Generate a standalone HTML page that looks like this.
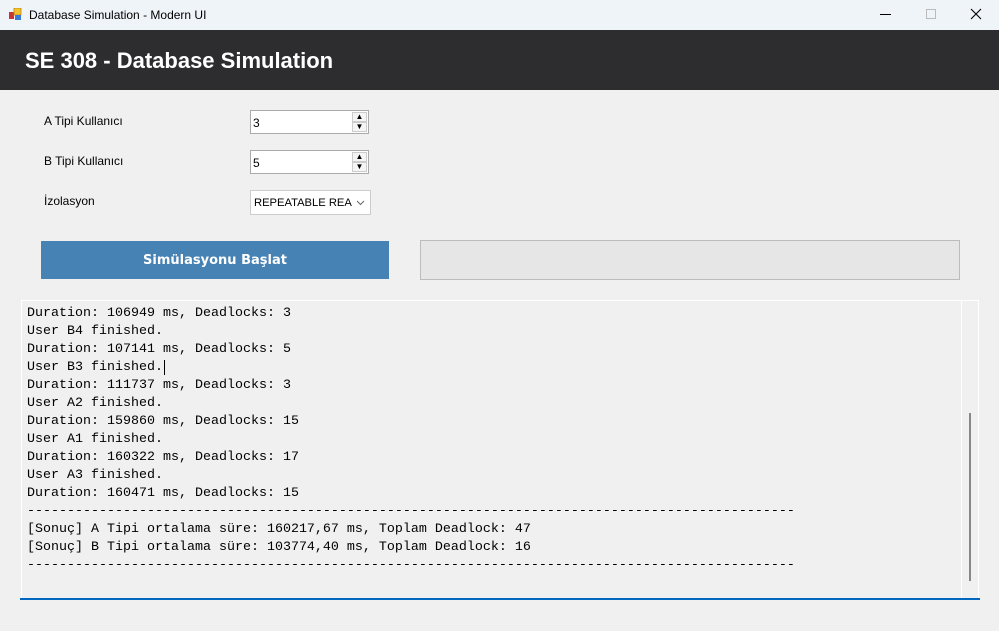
<!DOCTYPE html>
<html><head><meta charset="utf-8"><style>
*{margin:0;padding:0;box-sizing:border-box}
body{width:999px;height:631px;background:#f0f0f0;position:relative;overflow:hidden;font-family:"Liberation Sans","DejaVu Sans",sans-serif}
.tb{position:absolute;left:0;top:0;width:999px;height:30px;background:#eff4f9}
.tb .t{position:absolute;left:29px;top:8px;font-size:12px;color:#000}
.hd{position:absolute;left:0;top:30px;width:999px;height:60px;background:#2d2d30}
.hd span{position:absolute;left:25px;top:18px;color:#fff;font-weight:bold;font-size:22px;font-family:"Liberation Sans",sans-serif}
.lbl{position:absolute;left:44px;font-size:12px;color:#000}
.num{position:absolute;left:250px;width:119px;height:24px;border:1px solid #aaa;background:#fff;font-size:12px;padding:5px 0 0 2px}
.spin{position:absolute;right:1px;top:1px;width:15px;height:20px}
.spin div{height:10px;border:1px solid #ccc;background:#f5f5f5;font-size:8px;line-height:8px;text-align:center}
.cb{position:absolute;left:250px;top:190px;width:121px;height:25px;border:1px solid #ccc;background:#fff;font-size:11.2px;padding:6px 0 0 3px}
.btn{position:absolute;left:41px;top:241px;width:348px;height:38px;background:#4682b4;color:#fff;font-weight:bold;font-size:13px;text-align:center;line-height:40px;font-family:"DejaVu Sans",sans-serif}
.pb{position:absolute;left:420px;top:240px;width:540px;height:40px;border:1px solid #bcbcbc;background:#e6e6e6}
.box{position:absolute;left:21px;top:300px;width:958px;height:298px;border-left:1px solid #fff;border-top:1px solid #fff;background:#f0f0f0}
.log{position:absolute;left:27px;top:305px;font-family:"Liberation Mono",monospace;font-size:13.33px;line-height:18px;white-space:pre;color:#000}
.sbl{position:absolute;left:961px;top:301px;width:1px;height:297px;background:#fff}
.sbr{position:absolute;left:978px;top:301px;width:1px;height:297px;background:#fff}
.thumb{position:absolute;left:969px;top:413px;width:2px;height:168px;background:#888}
.blue{position:absolute;left:20px;top:598px;width:960px;height:2px;background:#0067c0}
</style></head><body>
<div class="tb">
<svg style="position:absolute;left:9px;top:8px" width="14" height="13"><rect x="0" y="4" width="5" height="7" fill="#c33"/><rect x="5" y="0" width="7" height="7" fill="#f2c230" stroke="#b80" stroke-width=".8"/><rect x="6" y="7" width="6" height="5" fill="#3a7bd5"/></svg>
<span class="t">Database Simulation - Modern UI</span>
<div style="position:absolute;left:880px;top:14px;width:11px;height:1px;background:#000"></div>
<div style="position:absolute;left:926px;top:9px;width:10px;height:10px;border:1px solid #bbb"></div>
<svg style="position:absolute;left:970px;top:8px" width="12" height="12"><path d="M1 1L11 11M11 1L1 11" stroke="#000" stroke-width="1.1"/></svg>
</div>
<div class="hd"><span>SE 308 - Database Simulation</span></div>
<div class="lbl" style="top:114px">A Tipi Kullanıcı</div>
<div class="lbl" style="top:154px">B Tipi Kullanıcı</div>
<div class="lbl" style="top:194px">İzolasyon</div>
<div class="num" style="top:110px">3<div class="spin"><div>▲</div><div>▼</div></div></div>
<div class="num" style="top:150px">5<div class="spin"><div>▲</div><div>▼</div></div></div>
<div class="cb">REPEATABLE REA<svg style="position:absolute;right:5px;top:9px" width="9" height="6"><path d="M1 1L4.5 4.5L8 1" stroke="#666" fill="none"/></svg></div>
<div class="btn">Simülasyonu Başlat</div>
<div class="pb"></div>
<div class="box"></div>
<div class="log">Duration: 106949 ms, Deadlocks: 3
User B4 finished.
Duration: 107141 ms, Deadlocks: 5
User B3 finished.<span style="border-left:1px solid #000;margin-left:1px"></span>
Duration: 111737 ms, Deadlocks: 3
User A2 finished.
Duration: 159860 ms, Deadlocks: 15
User A1 finished.
Duration: 160322 ms, Deadlocks: 17
User A3 finished.
Duration: 160471 ms, Deadlocks: 15
------------------------------------------------------------------------------------------------
[Sonuç] A Tipi ortalama süre: 160217,67 ms, Toplam Deadlock: 47
[Sonuç] B Tipi ortalama süre: 103774,40 ms, Toplam Deadlock: 16
------------------------------------------------------------------------------------------------</div>
<div class="sbl"></div><div class="sbr"></div><div class="thumb"></div>
<div class="blue"></div>
</body></html>
